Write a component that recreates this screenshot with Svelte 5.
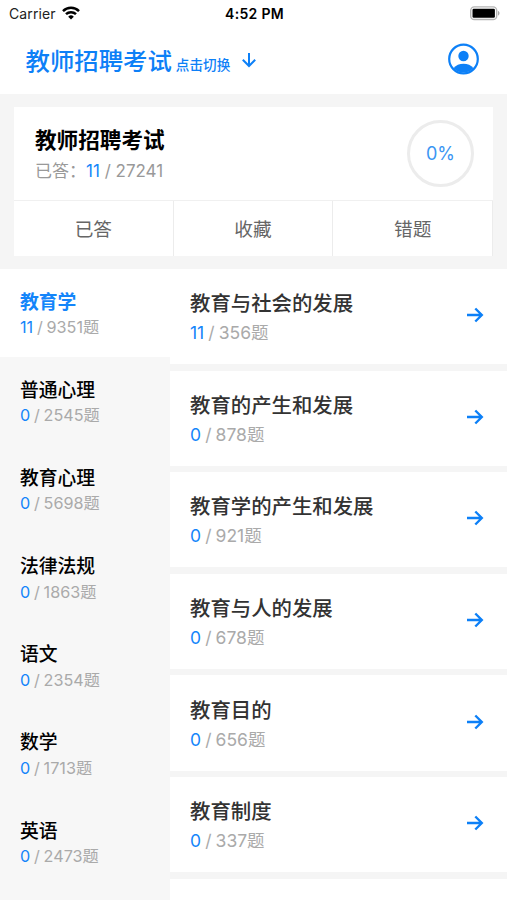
<script lang="ts">
	type Entry = {
		name: string;
		done: number;
		total: number;
	};

	const examName = '教师招聘考试';
	const answered = 11;
	const total = 27241;
	const percent = Math.floor((answered / total) * 100);

	const tabs = ['已答', '收藏', '错题'];

	const subjects: Entry[] = [
		{ name: '教育学', done: 11, total: 9351 },
		{ name: '普通心理', done: 0, total: 2545 },
		{ name: '教育心理', done: 0, total: 5698 },
		{ name: '法律法规', done: 0, total: 1863 },
		{ name: '语文', done: 0, total: 2354 },
		{ name: '数学', done: 0, total: 1713 },
		{ name: '英语', done: 0, total: 2473 }
	];

	const chapters: Entry[] = [
		{ name: '教育与社会的发展', done: 11, total: 356 },
		{ name: '教育的产生和发展', done: 0, total: 878 },
		{ name: '教育学的产生和发展', done: 0, total: 921 },
		{ name: '教育与人的发展', done: 0, total: 678 },
		{ name: '教育目的', done: 0, total: 656 },
		{ name: '教育制度', done: 0, total: 337 }
	];

	let selected = $state(0);
</script>

<div class="screen">
	<div class="status-bar">
		<div class="carrier">
			<span>Carrier</span>
			<svg width="18" height="14" viewBox="0 0 18 14" aria-hidden="true">
				<g fill="none" stroke="#000" stroke-width="2.5">
					<path d="M1 5.1a11.4 11.4 0 0 1 16 0" />
					<path d="M4 8.2a7.1 7.1 0 0 1 10 0" />
				</g>
				<path d="M9 13.6 6.2 10.7a4 4 0 0 1 5.6 0z" />
			</svg>
		</div>
		<div class="clock">4:52 PM</div>
		<svg class="battery" width="31" height="15" viewBox="0 0 31 15" aria-hidden="true">
			<rect x="1.7" y="0.9" width="26" height="12.6" rx="3.6" fill="#fff" stroke="#b5b5b5" stroke-width="1.4" />
			<rect x="3.5" y="2.7" width="22.4" height="9" rx="1.2" />
			<path d="M29 5.1c2 .7 2 3.8 0 4.5z" fill="#aaa" />
		</svg>
	</div>

	<header>
		<button type="button" class="switcher">
			<span class="exam">{examName}</span>
			<span class="hint">点击切换</span>
			<svg width="16" height="16" viewBox="0 0 16 16" aria-hidden="true">
				<path d="M8 1v13M1.8 7.8 8 14l6.2-6.2" />
			</svg>
		</button>
		<button type="button" class="profile" aria-label="个人中心">
			<svg width="32" height="32" viewBox="0 0 32 32">
				<circle cx="15.5" cy="16" r="14.3" fill="none" stroke="#0d80f7" stroke-width="2.2" />
				<circle cx="15.5" cy="13" r="5.2" fill="#0d80f7" />
				<path d="M5.5 25.2c2.4-3.3 6-4.5 10-4.5s7.6 1.2 10 4.5a14 14 0 0 1-20 0z" fill="#0d80f7" />
			</svg>
		</button>
	</header>

	<section class="summary">
		<div class="card">
			<div class="card-head">
				<div>
					<h1>{examName}</h1>
					<p class="progress">已答：<b>{answered}</b> / {total}</p>
				</div>
				<div class="ring">{percent}%</div>
			</div>
			<div class="tabs">
				{#each tabs as tab}
					<button type="button">{tab}</button>
				{/each}
			</div>
		</div>
	</section>

	<main>
		<nav>
			{#each subjects as subject, i}
				<button type="button" class="subject" class:active={selected === i} onclick={() => (selected = i)}>
					<span class="name">{subject.name}</span>
					<span class="count"><b>{subject.done}</b> / {subject.total}题</span>
				</button>
			{/each}
		</nav>
		<div class="chapters">
			{#each chapters as chapter}
				<button type="button" class="chapter">
					<span class="info">
						<span class="name">{chapter.name}</span>
						<span class="count"><b>{chapter.done}</b> / {chapter.total}题</span>
					</span>
					<svg width="18" height="16" viewBox="0 0 18 16" aria-hidden="true">
						<path d="M1 8h15M9.3 1.5 15.8 8l-6.5 6.5" />
					</svg>
				</button>
			{/each}
			<div class="chapter"></div>
		</div>
	</main>
</div>

<style>
	:global(body) {
		margin: 0;
		overflow: hidden;
	}

	.screen {
		display: flex;
		flex-direction: column;
		width: 507px;
		height: 900px;
		overflow: hidden;
		background: #f5f5f5;
		font-family: Inter, 'Noto Sans CJK SC', sans-serif;
		color: #000;
	}

	button {
		margin: 0;
		padding: 0;
		border: 0;
		background: none;
		font: inherit;
		color: inherit;
		text-align: left;
		cursor: pointer;
	}

	b {
		font-weight: 400;
		color: #1485fa;
	}

	svg {
		display: block;
		flex: none;
	}

	.status-bar {
		display: grid;
		grid-template-columns: 1fr auto 1fr;
		align-items: center;
		height: 27px;
		padding: 0 7px 0 9px;
		background: #fff;
		font-size: 14px;
	}

	.carrier {
		display: flex;
		align-items: center;
		gap: 6px;
		color: #222;
		letter-spacing: 0.1px;
	}

	.carrier svg {
		margin-top: -1px;
	}

	.clock {
		font-weight: 600;
		letter-spacing: 0.3px;
	}

	.battery {
		justify-self: end;
	}

	header {
		display: flex;
		flex: none;
		justify-content: space-between;
		align-items: center;
		box-sizing: border-box;
		height: 67px;
		padding: 0 27px 3px 25.5px;
		background: #fff;
		color: #0d80f7;
	}

	.switcher {
		display: flex;
		align-items: center;
		line-height: 32px;
	}

	.exam {
		margin-top: 4px;
		font-size: 24.4px;
		font-weight: 500;
	}

	.hint {
		margin: 11px 11px 0 4px;
		font-size: 13.6px;
		font-weight: 500;
	}

	.switcher svg {
		margin-top: 2px;
	}

	.switcher path,
	.chapter path {
		fill: none;
		stroke: #0d80f7;
		stroke-width: 2;
	}

	.chapter path {
		stroke-width: 2.4;
	}

	.summary {
		flex: none;
		padding: 13px 14px;
	}

	.card {
		background: #fff;
	}

	.card-head {
		display: flex;
		justify-content: space-between;
		box-sizing: border-box;
		height: 93px;
		padding: 13px 19px 0 21px;
	}

	h1 {
		margin: 4px 0 0;
		font-size: 21.6px;
		font-weight: 700;
		line-height: 32px;
	}

	.progress {
		margin: 3px 0 0;
		font-size: 17px;
		line-height: 24px;
		color: #999;
	}

	.ring {
		display: grid;
		place-items: center;
		box-sizing: border-box;
		width: 67px;
		height: 67px;
		border: 3px solid #ececec;
		border-radius: 50%;
		font-size: 18px;
		color: #3b96f3;
	}

	.tabs {
		display: grid;
		grid-template-columns: repeat(3, 1fr);
		height: 56px;
		border-top: 1px solid #f0f0f0;
		box-sizing: border-box;
	}

	.tabs button {
		padding-bottom: 2px;
		border-right: 1px solid #ececec;
		font-size: 18.7px;
		text-align: center;
		color: #666;
	}

	main {
		display: flex;
		flex: 1;
		min-height: 0;
	}

	nav {
		width: 169.5px;
		background: #f7f7f7;
	}

	.subject {
		display: flex;
		flex-direction: column;
		box-sizing: border-box;
		width: 100%;
		height: 88.2px;
		padding: 19.5px 20px 0;
	}

	.subject.active {
		background: #fff;
	}

	.subject .name {
		font-size: 18.8px;
		font-weight: 500;
		line-height: 28px;
	}

	.subject.active .name {
		font-weight: 700;
		color: #1485fa;
	}

	.count {
		color: #aaa;
		white-space: nowrap;
		word-spacing: -0.8px;
	}

	.subject .count {
		margin-top: -1.5px;
		font-size: 16.2px;
		line-height: 24px;
	}

	.chapters {
		display: flex;
		flex: 1;
		flex-direction: column;
		gap: 6.3px;
	}

	.chapter {
		display: flex;
		flex: none;
		justify-content: space-between;
		align-items: center;
		box-sizing: border-box;
		height: 95.3px;
		padding: 0 23px 3px 20.5px;
		background: #fff;
	}

	.info {
		display: flex;
		flex-direction: column;
		margin-top: 5px;
	}

	.chapter .name {
		font-size: 20.4px;
		font-weight: 500;
		line-height: 32px;
		color: #333;
	}

	.chapter .count {
		margin-top: -1px;
		font-size: 17.5px;
		line-height: 28px;
	}
</style>
